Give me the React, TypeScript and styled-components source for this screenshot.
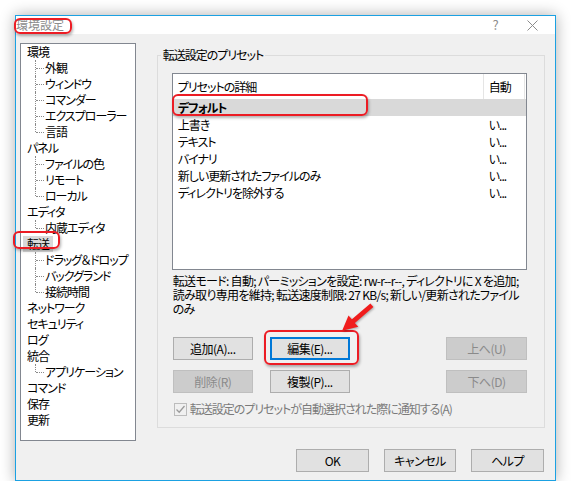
import styled, { createGlobalStyle } from "styled-components";

const GlobalStyle = createGlobalStyle`
  html, body {
    margin: 0;
    padding: 0;
    background: #ffffff;
  }
  body {
    font-family: "Noto Sans CJK JP", "Noto Sans", sans-serif;
    font-size: 12px;
    font-feature-settings: "palt" 1;
    letter-spacing: -1px;
    color: #000;
  }
`;

const Annotated = styled.span<{ $t: number; $r: number; $b: number; $l: number }>`
  position: relative;
  display: inline-block;

  &::after {
    content: "";
    position: absolute;
    top: ${(p) => p.$t}px;
    right: ${(p) => p.$r}px;
    bottom: ${(p) => p.$b}px;
    left: ${(p) => p.$l}px;
    border: 2px solid #ec1c24;
    border-radius: 6px;
    box-shadow: 1px 2px 3px rgba(0, 0, 0, 0.3);
    pointer-events: none;
  }
`;

const Window = styled.div`
  margin: 15px 0 0 15px;
  width: 541px;
  height: 466px;
  box-sizing: border-box;
  border: 1px solid #1ba1e2;
  background: #f0f0f0;
  box-shadow: 0 0 14px rgba(0, 0, 0, 0.32);
  display: flex;
  flex-direction: column;
`;

const TitleBar = styled.div`
  height: 18px;
  background: #ffffff;
  display: flex;
  align-items: center;
  color: #8c8c8c;
  line-height: 14px;
`;

const TitleText = styled.span`
  display: inline-block;
  letter-spacing: 0;
`;

const TitleButton = styled.span<{ $w: number }>`
  width: ${(p) => p.$w}px;
  display: flex;
  justify-content: center;
  align-items: center;
  color: #8c8c8c;
  font-size: 13px;
`;

const Body = styled.div`
  flex: 1;
  padding: 9px 10px 8px 4px;
  display: flex;
  flex-direction: column;
`;

const MainRow = styled.div`
  display: flex;
  align-items: flex-start;
  gap: 21px;
`;

const Tree = styled.div`
  width: 116px;
  height: 398px;
  box-sizing: border-box;
  border: 1px solid #828790;
  background: #ffffff;
`;

const TreeRow = styled.div<{ $child?: boolean; $last?: boolean }>`
  position: relative;
  height: 16px;
  line-height: 16px;
  padding-left: ${(p) => (p.$child ? 20 : 2)}px;
  white-space: nowrap;

  ${(p) =>
    p.$child &&
    `
    &::before {
      content: "";
      position: absolute;
      left: 14px;
      top: 0;
      height: ${p.$last ? 8 : 16}px;
      border-left: 1px dotted #8a8a8a;
    }
    &::after {
      content: "";
      position: absolute;
      left: 15px;
      top: 8px;
      width: 8px;
      border-top: 1px dotted #8a8a8a;
    }
  `}
`;

const TreeLabel = styled.span<{ $selected?: boolean }>`
  display: inline-block;
  padding: 0 4px;
  background: ${(p) => (p.$selected ? "#d9d9d9" : "transparent")};
`;

const RightColumn = styled.div`
  margin-top: 12px;
  width: 389px;
`;

const GroupBox = styled.div`
  height: 373px;
  box-sizing: border-box;
  border: 1px solid #dcdcdc;
  padding: 0 17px 0 14px;
`;

const Legend = styled.div`
  width: fit-content;
  margin: -8px 0 0 -11px;
  padding: 0 2px;
  line-height: 14px;
  background: #f0f0f0;
`;

const ListView = styled.div`
  margin-top: 11px;
  height: 197px;
  box-sizing: border-box;
  border: 1px solid #828790;
  background: #ffffff;
`;

const ListRow = styled.div<{ $header?: boolean; $selected?: boolean }>`
  display: grid;
  grid-template-columns: 311px 1fr;
  height: ${(p) => (p.$header ? 25 : 17)}px;
  line-height: ${(p) => (p.$header ? 25 : 17)}px;
  background: ${(p) => (p.$selected ? "#d9d9d9" : "transparent")};
  font-weight: ${(p) => (p.$selected ? 700 : 400)};
`;

const Cell = styled.div<{ $divider?: boolean }>`
  padding-left: 5px;
  overflow: hidden;
  white-space: nowrap;
  border-right: ${(p) => (p.$divider ? "1px solid #e5e5e5" : "none")};
`;

const HeaderEnd = styled.div`
  border-right: 1px solid #e5e5e5;
  padding-left: 5px;
  margin-right: 1px;
`;

const Description = styled.div`
  margin-top: 4px;
  padding-left: 1px;
  line-height: 14px;
  letter-spacing: -0.7px;
  white-space: nowrap;
`;

const ButtonGrid = styled.div`
  position: relative;
  margin-top: 21px;
  padding-left: 1px;
  display: grid;
  grid-template-columns: 80px 80px 1fr 81px;
  grid-auto-rows: 23px;
  column-gap: 17px;
  row-gap: 10px;
`;

const Button = styled.button<{ $default?: boolean; $w?: number }>`
  width: ${(p) => (p.$w ? `${p.$w}px` : "100%")};
  height: 23px;
  box-sizing: border-box;
  padding: 0;
  font: inherit;
  letter-spacing: -0.5px;
  line-height: 19px;
  color: #000;
  background: #e1e1e1;
  border: ${(p) => (p.$default ? "2px solid #0078d7" : "1px solid #adadad")};

  &:disabled {
    color: #8a8a8a;
    background: #cccccc;
    border-color: #bfbfbf;
  }
`;

const EndCell = styled.div`
  grid-column: 4;
`;

const ArrowMark = styled.svg`
  position: absolute;
  left: 168px;
  top: -34px;
  width: 34px;
  height: 30px;
  overflow: visible;
  filter: drop-shadow(1px 1px 1px rgba(0, 0, 0, 0.3));
`;

const CheckRow = styled.div`
  margin-top: 9px;
  padding-left: 2px;
  display: flex;
  align-items: center;
  gap: 3px;
  color: #7a7a7a;
  line-height: 14px;
`;

const CheckBox = styled.span`
  width: 13px;
  height: 13px;
  box-sizing: border-box;
  border: 1px solid #bcbcbc;
  background: #f0f0f0;
  display: flex;
  align-items: center;
  justify-content: center;
`;

const Footer = styled.div`
  margin-top: 8px;
  display: flex;
  justify-content: flex-end;
  gap: 15px;
  padding-right: 1px;
`;

const treeItems: { label: string; child?: boolean; last?: boolean; selected?: boolean }[] = [
  { label: "環境" },
  { label: "外観", child: true },
  { label: "ウィンドウ", child: true },
  { label: "コマンダー", child: true },
  { label: "エクスプローラー", child: true },
  { label: "言語", child: true, last: true },
  { label: "パネル" },
  { label: "ファイルの色", child: true },
  { label: "リモート", child: true },
  { label: "ローカル", child: true, last: true },
  { label: "エディタ" },
  { label: "内蔵エディタ", child: true, last: true },
  { label: "転送", selected: true },
  { label: "ドラッグ＆ドロップ", child: true },
  { label: "バックグランド", child: true },
  { label: "接続時間", child: true, last: true },
  { label: "ネットワーク" },
  { label: "セキュリティ" },
  { label: "ログ" },
  { label: "統合" },
  { label: "アプリケーション", child: true, last: true },
  { label: "コマンド" },
  { label: "保存" },
  { label: "更新" },
];

const presets = [
  "上書き",
  "テキスト",
  "バイナリ",
  "新しい更新されたファイルのみ",
  "ディレクトリを除外する",
];

export default function App() {
  return (
    <>
      <GlobalStyle />
      <Window>
        <TitleBar>
          <Annotated $t={0} $r={-8} $b={-2} $l={-2}>
            <TitleText>環境設定</TitleText>
          </Annotated>
          <div style={{ flex: 1 }} />
          <TitleButton $w={28}>?</TitleButton>
          <TitleButton $w={46}>
            <svg width="11" height="11" viewBox="0 0 11 11">
              <path d="M0.5 0.5 L10.5 10.5 M10.5 0.5 L0.5 10.5" stroke="#8c8c8c" strokeWidth="1" />
            </svg>
          </TitleButton>
        </TitleBar>
        <Body>
          <MainRow>
            <Tree>
              {treeItems.map((item) => (
                <TreeRow key={item.label} $child={item.child} $last={item.last}>
                  {item.selected ? (
                    <Annotated $t={-5} $r={-7} $b={3} $l={-10}>
                      <TreeLabel $selected>{item.label}</TreeLabel>
                    </Annotated>
                  ) : (
                    <TreeLabel>{item.label}</TreeLabel>
                  )}
                </TreeRow>
              ))}
            </Tree>
            <RightColumn>
              <GroupBox>
                <Legend>転送設定のプリセット</Legend>
                <ListView>
                  <ListRow $header>
                    <Cell $divider>プリセットの詳細</Cell>
                    <HeaderEnd>自動</HeaderEnd>
                  </ListRow>
                  <Annotated $t={-5} $r={158} $b={0} $l={-1} style={{ display: "block" }}>
                    <ListRow $selected>
                      <Cell>デフォルト</Cell>
                      <Cell />
                    </ListRow>
                  </Annotated>
                  {presets.map((p) => (
                    <ListRow key={p}>
                      <Cell>{p}</Cell>
                      <Cell>い...</Cell>
                    </ListRow>
                  ))}
                </ListView>
                <Description>
                  転送モード: 自動; パーミッションを設定: rw-r--r--, ディレクトリに X を追加;
                  <br />
                  読み取り専用を維持; 転送速度制限: 27 KB/s; 新しい/更新されたファイル
                  <br />
                  のみ
                </Description>
                <ButtonGrid>
                  <Button>追加(A)...</Button>
                  <Annotated $t={-7} $r={-9} $b={-5} $l={-6}>
                    <Button $default $w={80}>
                      編集(E)...
                    </Button>
                  </Annotated>
                  <EndCell>
                    <Button disabled>上へ(U)</Button>
                  </EndCell>
                  <Button disabled>削除(R)</Button>
                  <Button>複製(P)...</Button>
                  <EndCell>
                    <Button disabled>下へ(D)</Button>
                  </EndCell>
                  <ArrowMark viewBox="0 0 32 28">
                    <polygon
                      points="2,26 17.2,22.2 14,18.6 31.4,3.7 28.6,0.3 11.2,15.2 8,11.6"
                      fill="#f01c1c"
                    />
                  </ArrowMark>
                </ButtonGrid>
                <CheckRow>
                  <CheckBox>
                    <svg width="11" height="11" viewBox="0 0 11 11">
                      <path d="M1.5 5.5 L4.2 8.2 L9.5 2" stroke="#9a9a9a" strokeWidth="1.3" fill="none" />
                    </svg>
                  </CheckBox>
                  転送設定のプリセットが自動選択された際に通知する(A)
                </CheckRow>
              </GroupBox>
            </RightColumn>
          </MainRow>
          <Footer>
            <Button $w={73}>OK</Button>
            <Button $w={72}>キャンセル</Button>
            <Button $w={73}>ヘルプ</Button>
          </Footer>
        </Body>
      </Window>
    </>
  );
}
